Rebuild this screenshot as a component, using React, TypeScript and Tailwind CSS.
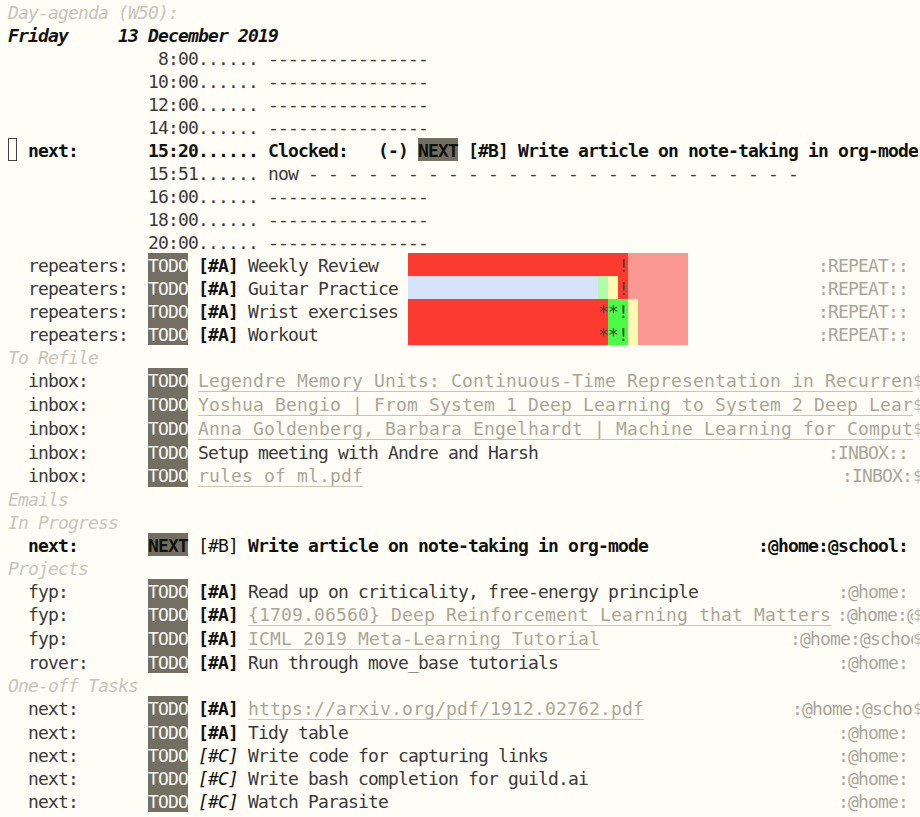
import React from "react";

type P = { c?: string; children?: React.ReactNode };
const S = ({ c = "", children }: P) => (
  <span className={`shrink-0 pt-[2px] whitespace-pre ${c}`}>{children}</span>
);

const DARK = "text-[#3a3a3a]";
const BOLD = "text-[#111111] font-bold";
const BOLDIT = "text-[#111111] font-bold italic";
const HEAD = "text-[#c5c5bc] italic";
const KW = "bg-[#736f63] text-[#f7f7f3]";
const KWN = "bg-[#736f63] text-[#111111] font-bold";
const LINK =
  "text-[#aba698] underline decoration-[#c8c4b7] decoration-1 underline-offset-[4px] tracking-[0.163px]";
const TAG = "text-[#a9a69b]";
const PA = "text-[#111111] font-bold";
const PB = "text-[#111111]";
const PC = "text-[#111111] italic";
const HG = "text-[#4a4242]";
const GLYPH = "text-[#bcb8ac]";

const RED = "bg-[#fc3a30]";
const PINK = "bg-[#fb9891]";
const BLUE = "bg-[#d6e4fb]";
const LGREEN = "bg-[#b1fcaa]";
const YELLOW = "bg-[#fcfbb1]";
const GREEN = "bg-[#4cfb47]";

const sp = (n: number) => " ".repeat(n);

function Row({ tall = false, children }: { tall?: boolean; children: React.ReactNode }) {
  return (
    <div className={`flex items-stretch ${tall ? "h-[24px]" : "h-[23px]"}`}>{children}</div>
  );
}

function TRow({
  tall = false,
  cut = "w-[905px]",
  glyph = "w-[7px]",
  children,
}: {
  tall?: boolean;
  cut?: string;
  glyph?: string;
  children: React.ReactNode;
}) {
  return (
    <div className={`flex items-stretch ${tall ? "h-[24px]" : "h-[23px]"}`}>
      <div className={`flex items-stretch overflow-hidden shrink-0 ${cut}`}>{children}</div>
      <span
        className={`shrink-0 overflow-hidden pt-[2px] whitespace-pre text-[16px] ${glyph} ${GLYPH}`}
      >
        $
      </span>
    </div>
  );
}

function Head({ children }: { children: string }) {
  return (
    <Row>
      <S c={HEAD}>{children}</S>
    </Row>
  );
}

function TimeRow({ t }: { t: string }) {
  const pad = t.length === 4 ? 15 : 14;
  return (
    <Row>
      <S c={DARK}>{sp(pad) + t + "...... ----------------"}</S>
    </Row>
  );
}

type Cell = [string, string];

function Repeater({ title, graph }: { title: string; graph: Cell[] }) {
  return (
    <Row>
      <S c={DARK}>{"  repeaters:  "}</S>
      <S c={KW}>TODO</S>
      <S c={DARK}> </S>
      <S c={PA}>[#A]</S>
      <S c={DARK}>{" " + title.padEnd(16)}</S>
      {graph.map(([bg, txt], i) => (
        <S key={i} c={`${bg} ${HG}`}>
          {txt}
        </S>
      ))}
      <S c={TAG}>{sp(13) + ":REPEAT::"}</S>
    </Row>
  );
}

function Lead({ cat, kw = "TODO" }: { cat: string; kw?: string }) {
  return (
    <>
      <S c={DARK}>{("  " + cat).padEnd(14)}</S>
      <S c={kw === "NEXT" ? KWN : KW}>{kw}</S>
      <S c={DARK}> </S>
    </>
  );
}

const g1: Cell[] = [
  [RED, sp(21) + "!"],
  [PINK, sp(6)],
];
const g2: Cell[] = [
  [BLUE, sp(19)],
  [LGREEN, " "],
  [YELLOW, " "],
  [RED, "!"],
  [PINK, sp(6)],
];
const g3: Cell[] = [
  [RED, sp(19) + "*"],
  [GREEN, "*!"],
  [YELLOW, " "],
  [PINK, sp(5)],
];

export default function App() {
  return (
    <div className="w-[920px] min-h-[817px] h-[817px] overflow-hidden bg-[#fffef6] pl-[8px] font-['DejaVu_Sans_Mono',monospace] text-[18px] leading-[21px] tracking-[-0.837px]">
      <Head>Day-agenda (W50):</Head>
      <Row>
        <S c={BOLDIT}>Friday     13 December 2019</S>
      </Row>
      <TimeRow t="8:00" />
      <TimeRow t="10:00" />
      <TimeRow t="12:00" />
      <TimeRow t="14:00" />
      <TRow cut="w-[910px]" glyph="w-[2px]">
        <span className="shrink-0 w-[10px] flex">
          <span className="w-[9px] h-full border border-[#444444]" />
        </span>
        <S c={BOLD}>{" next:" + sp(7) + "15:20...... Clocked:   (-) "}</S>
        <S c={KWN}>NEXT</S>
        <S c={BOLD}> [#B] Write article on note-taking in org-mode</S>
      </TRow>
      <Row>
        <S c={DARK}>{sp(14) + "15:51...... now" + " -".repeat(25)}</S>
      </Row>
      <TimeRow t="16:00" />
      <TimeRow t="18:00" />
      <TimeRow t="20:00" />
      <Repeater title="Weekly Review" graph={g1} />
      <Repeater title="Guitar Practice" graph={g2} />
      <Repeater title="Wrist exercises" graph={g3} />
      <Repeater title="Workout" graph={g3} />

      <Head>To Refile</Head>
      <TRow tall>
        <Lead cat="inbox:" />
        <S c={LINK}>Legendre Memory Units: Continuous-Time Representation in Recurrent Neural Networks</S>
      </TRow>
      <TRow tall>
        <Lead cat="inbox:" />
        <S c={LINK}>Yoshua Bengio | From System 1 Deep Learning to System 2 Deep Learning</S>
      </TRow>
      <TRow tall>
        <Lead cat="inbox:" />
        <S c={LINK}>Anna Goldenberg, Barbara Engelhardt | Machine Learning for Computational Biology</S>
      </TRow>
      <Row>
        <Lead cat="inbox:" />
        <S c={DARK}>Setup meeting with Andre and Harsh</S>
        <S c={TAG}>{sp(29) + ":INBOX::"}</S>
      </Row>
      <TRow tall>
        <Lead cat="inbox:" />
        <S c={LINK}>rules of ml.pdf</S>
        <S c={`${TAG} ml-[479px]`}>:INBOX::</S>
      </TRow>

      <Head>Emails</Head>
      <Head>In Progress</Head>
      <Row>
        <S c={BOLD}>{"  next:" + sp(7)}</S>
        <S c={KWN}>NEXT</S>
        <S c={PB}> [#B] </S>
        <S c={BOLD}>Write article on note-taking in org-mode</S>
        <S c={BOLD}>{sp(11) + ":@home:@school:"}</S>
      </Row>

      <Head>Projects</Head>
      <Row>
        <Lead cat="fyp:" />
        <S c={PA}>[#A]</S>
        <S c={DARK}> Read up on criticality, free-energy principle</S>
        <S c={TAG}>{sp(14) + ":@home:"}</S>
      </Row>
      <TRow tall>
        <Lead cat="fyp:" />
        <S c={PA}>[#A]</S>
        <S c={DARK}> </S>
        <S c={LINK}>{"{1709.06560} Deep Reinforcement Learning that Matters"}</S>
        <S c={`${TAG} ml-[6px]`}>:@home:@school:</S>
      </TRow>
      <TRow tall>
        <Lead cat="fyp:" />
        <S c={PA}>[#A]</S>
        <S c={DARK}> </S>
        <S c={LINK}>ICML 2019 Meta-Learning Tutorial</S>
        <S c={`${TAG} ml-[190px]`}>:@home:@school:</S>
      </TRow>
      <Row>
        <Lead cat="rover:" />
        <S c={PA}>[#A]</S>
        <S c={DARK}> Run through move_base tutorials</S>
        <S c={TAG}>{sp(28) + ":@home:"}</S>
      </Row>

      <Head>One-off Tasks</Head>
      <TRow tall>
        <Lead cat="next:" />
        <S c={PA}>[#A]</S>
        <S c={DARK}> </S>
        <S c={LINK}>https://arxiv.org/pdf/1912.02762.pdf</S>
        <S c={`${TAG} ml-[148px]`}>:@home:@school:</S>
      </TRow>
      <Row>
        <Lead cat="next:" />
        <S c={PA}>[#A]</S>
        <S c={DARK}> Tidy table</S>
        <S c={TAG}>{sp(49) + ":@home:"}</S>
      </Row>
      <Row>
        <Lead cat="next:" />
        <S c={PC}>[#C]</S>
        <S c={DARK}> Write code for capturing links</S>
        <S c={TAG}>{sp(29) + ":@home:"}</S>
      </Row>
      <Row>
        <Lead cat="next:" />
        <S c={PC}>[#C]</S>
        <S c={DARK}> Write bash completion for guild.ai</S>
        <S c={TAG}>{sp(25) + ":@home:"}</S>
      </Row>
      <Row>
        <Lead cat="next:" />
        <S c={PC}>[#C]</S>
        <S c={DARK}> Watch Parasite</S>
        <S c={TAG}>{sp(45) + ":@home:"}</S>
      </Row>
    </div>
  );
}
